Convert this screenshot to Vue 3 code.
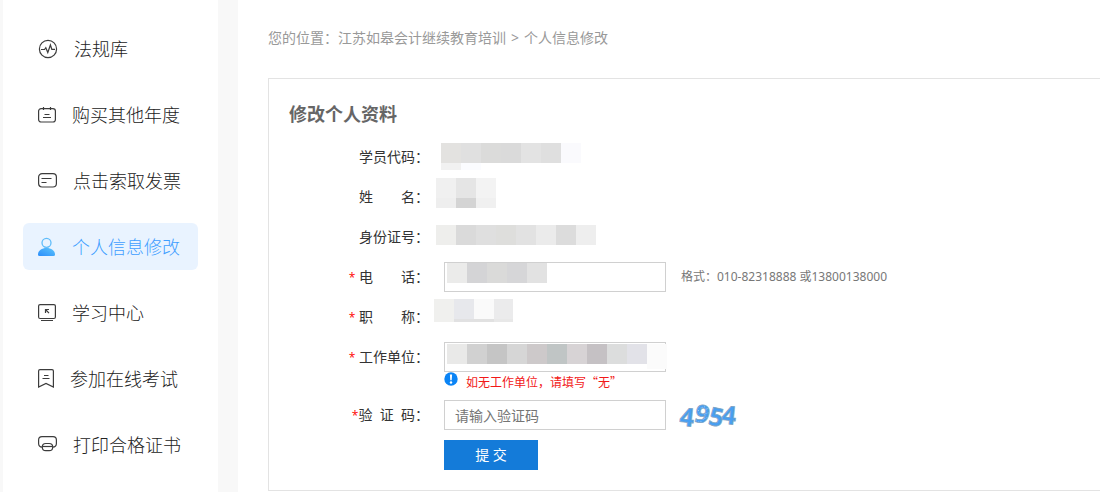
<script setup>
const nav = [
  { id: 'law', text: '法规库' },
  { id: 'buy', text: '购买其他年度' },
  { id: 'invoice', text: '点击索取发票' },
  { id: 'profile', text: '个人信息修改' },
  { id: 'study', text: '学习中心' },
  { id: 'exam', text: '参加在线考试' },
  { id: 'print', text: '打印合格证书' },
]

const strip = (colors, y = 0, h = 20) =>
  colors.map((fill, i) => ({ x: i * 20, y, w: 20, h, fill }))

const masks = {
  code: {
    w: 140, h: 27,
    cells: [
      ...strip(['#e3e2e0', '#e0e0e0', '#dbdbda', '#dadada', '#e3e3e3', '#dfdfdf', '#fafafd']),
      ...strip(['#f1f1f1', '#fbfcff'], 20, 7),
    ],
  },
  name: {
    w: 60, h: 30,
    cells: [...strip(['#f0f0f0', '#e5e5e5', '#f3f3f3']), ...strip(['#eeeeee', '#d4d4d4', '#f0f0f0'], 20, 10)],
  },
  card: {
    w: 160, h: 20,
    cells: strip(['#eeeeec', '#dadada', '#dfdfdf', '#dededc', '#e2e2e2', '#ebebeb', '#dcdcdc', '#eeeeee']),
  },
  phone: { w: 100, h: 20, cells: strip(['#ebebea', '#d4d4d6', '#dadad9', '#d6d6d8', '#e2e2e2']) },
  title: {
    w: 79, h: 23,
    cells: [
      ...strip(['#f0f0ee', '#e7e8ec', '#fafafa', '#ebebec']),
      ...strip(['#f0f0ee', '#e1e1e2', '#e1e1e1', '#e8e8e8'], 20, 3),
    ],
  },
  company: {
    w: 220, h: 25,
    cells: [
      ...strip(['#e9e9e8', '#d1d1d1', '#c5c5c5', '#d6d6d6', '#cdc9ca', '#c0c5c5', '#d7d3d5', '#c5c1c4', '#dcdddd', '#e2e2e8']),
      { x: 200, y: 0, w: 20, h: 25, fill: '#fbfbfb' },
    ],
  },
}

const rows = [
  { id: 'code', label: '学员代码：' },
  { id: 'name', label: '姓　　名：' },
  { id: 'card', label: '身份证号：' },
  { id: 'phone', label: '电　　话：', required: true, input: true, hint: '格式：010-82318888 或13800138000' },
  { id: 'title', label: '职　　称：', required: true },
  { id: 'company', label: '工作单位：', required: true, input: true, tip: '如无工作单位，请填写“无”' },
]
</script>

<template>
  <div class="page">
    <nav class="sidebar">
      <a v-for="n in nav" :key="n.id" href="#" class="item" :class="{ active: n.id === 'profile' }">
        <svg v-if="n.id === 'law'" width="20" height="20" viewBox="0 0 20 20" class="icon">
          <circle cx="10" cy="10" r="8.6" />
          <path d="M3 10.500h3.500l1.300-1.800 2 4.800 2.600-7.500 1.400 4.300h3.200" />
        </svg>
        <svg v-else-if="n.id === 'buy'" width="18" height="18" viewBox="0 0 18 18" class="icon">
          <rect x=".6" y="2.600" width="16.800" height="13.400" rx="2.500" />
          <path d="M5.500 1v3M12.500 1v3M6.500 8.500h5M5 11.500h8" />
        </svg>
        <svg v-else-if="n.id === 'invoice'" width="19" height="18" viewBox="0 0 19 18" class="icon">
          <rect x=".6" y="1.600" width="17.800" height="13.400" rx="3.500" />
          <path d="M3.500 6.500h10M3.500 10.500h5" />
        </svg>
        <svg v-else-if="n.id === 'profile'" width="18" height="20" viewBox="0 0 18 20">
          <defs>
            <linearGradient id="person" x1="0" y1="1" x2="1" y2="0">
              <stop offset="0" stop-color="#2b8dfb" />
              <stop offset="1" stop-color="#5cc4fb" />
            </linearGradient>
          </defs>
          <circle cx="8.500" cy="5.800" r="4.500" fill="none" stroke="#5fbcfa" stroke-width="1.300" />
          <path d="M0 17.500C0 13.500 4 11 8.500 11S17 13.500 17 17.500Q17 19 15.500 19H1.500Q0 19 0 17.500Z" fill="url(#person)" />
        </svg>
        <svg v-else-if="n.id === 'study'" width="18" height="18" viewBox="0 0 18 18" class="icon">
          <rect x=".6" y=".6" width="16.800" height="13.900" rx="1.500" />
          <path d="M3 16.500h12M7.500 9V5.500H11M7.500 5.500l3.500 3.700" />
        </svg>
        <svg v-else-if="n.id === 'exam'" width="16" height="19" viewBox="0 0 16 19" class="icon">
          <path d="M.6 18V2Q.6.600 2 .6H14Q15.400.600 15.400 2V18L8 14.500ZM6 6.500h4.500M4.500 9.500h7" />
        </svg>
        <svg v-else width="19" height="20" viewBox="0 0 19 20" class="icon">
          <path d="M4.300 12.200C2 12 .6 10.500.6 8.500V5Q.6 1.600 4 1.600H15Q18.400 1.600 18.400 5V8.500C18.400 10.500 17 12 14.700 12.200" />
          <path d="M4.500 11.500h10" />
          <rect x="4.300" y="8.500" width="10.400" height="7.200" rx="3.500" />
        </svg>
        <span>{{ n.text }}</span>
      </a>
    </nav>

    <main class="main">
      <p class="crumbs">
        <span>您的位置：江苏如皋会计继续教育培训</span>
        <span>&gt;</span>
        <span>个人信息修改</span>
      </p>
      <form class="panel" @submit.prevent>
        <h1>修改个人资料</h1>
        <div v-for="r in rows" :key="r.id" class="row">
          <component :is="r.input ? 'label' : 'span'" class="label" :for="r.input ? r.id : undefined">
            <i v-if="r.required">*</i>&nbsp;{{ r.label }}
          </component>
          <div class="value">
            <input v-if="r.input" :id="r.id" type="text" />
            <svg class="mask" :class="r.id" :width="masks[r.id].w" :height="masks[r.id].h" shape-rendering="crispEdges" aria-hidden="true">
              <rect v-for="(c, i) in masks[r.id].cells" :key="i" :x="c.x" :y="c.y" :width="c.w" :height="c.h" :fill="c.fill" />
            </svg>
            <span v-if="r.hint" class="hint">{{ r.hint }}</span>
          </div>
          <p v-if="r.tip" class="tip">
            <svg width="14" height="14" viewBox="0 0 14 14">
              <circle cx="7" cy="7" r="6.700" fill="#0b84f5" />
              <path d="M5.900 2.500h2.200l-.4 5.800H6.300Z" fill="#fff" />
              <circle cx="7" cy="10.500" r="1.200" fill="#fff" />
            </svg>
            <span>{{ r.tip }}</span>
          </p>
        </div>
        <div class="row">
          <label class="label" for="captcha"><i>*</i>验&nbsp;&nbsp;证&nbsp;&nbsp;码：</label>
          <div class="value">
            <input id="captcha" type="text" placeholder="请输入验证码" />
            <svg class="captcha" width="64" height="40" viewBox="0 0 64 40">
              <defs>
                <pattern id="speckle" width="5" height="5" patternUnits="userSpaceOnUse">
                  <rect width="5" height="5" fill="#489ff2" />
                  <path d="M0 4l2-2M3 1l1 1" stroke="#9cc8f2" />
                </pattern>
              </defs>
              <text x="1" y="31" transform="rotate(6 8 22)">4</text>
              <text x="16" y="28" transform="rotate(14 23 20)" class="rough">9</text>
              <text x="30" y="31" transform="rotate(12 37 23)">5</text>
              <text x="43" y="29" transform="rotate(6 50 20)">4</text>
            </svg>
          </div>
        </div>
        <button type="submit">提 交</button>
      </form>
    </main>
  </div>
</template>

<style>
body {
  margin: 0;
  background: #fff;
}
</style>

<style scoped>
.page {
  display: flex;
  min-height: 100vh;
  overflow: hidden;
  font-family: "Noto Sans", "Noto Sans CJK SC", sans-serif;
  font-size: 14px;
  line-height: 20px;
  color: #333;
}
.sidebar {
  box-sizing: border-box;
  flex: 0 0 238px;
  display: flex;
  flex-direction: column;
  gap: 19px;
  padding: 25px 20px 0;
  border: solid #f8f8f8;
  border-width: 0 20px 0 3px;
}
.item {
  display: flex;
  align-items: center;
  gap: 16px;
  height: 47px;
  padding-left: 15px;
  border-radius: 6px;
  font-size: 18px;
  font-weight: 300;
  white-space: nowrap;
  color: #222;
  text-decoration: none;
}
.item.active {
  background: #e9f3ff;
  color: #409eff;
}
.item svg {
  flex: none;
}
.icon {
  fill: none;
  stroke: #3c3c3c;
  stroke-width: 1.2;
}
.main {
  flex: 1;
  min-width: 0;
  padding: 28px 0 0 30px;
}
.crumbs {
  display: flex;
  gap: 5px;
  margin: 0 0 30px;
  color: #999;
}
.panel {
  padding: 23px 0 20px;
  border: 1px solid #e3e3e3;
  border-right: 0;
}
h1 {
  margin: 0 0 11px 20px;
  font-size: 18px;
  line-height: 24px;
  font-weight: 700;
  color: #666;
}
.row {
  display: grid;
  grid-template-columns: 160px 1fr;
  column-gap: 15px;
}
.label {
  text-align: right;
  white-space: nowrap;
  line-height: 40px;
}
i {
  font-family: "Open Sans", sans-serif;
  font-size: 12px;
  line-height: 1;
  font-style: normal;
  color: #f00;
}
.value {
  position: relative;
  display: flex;
  align-items: center;
  gap: 15px;
  height: 40px;
}
input {
  box-sizing: border-box;
  width: 222px;
  height: 30px;
  padding: 0 10px;
  border: 1px solid #d0d0d0;
  border-radius: 0;
  background: #fff;
  font: inherit;
  color: #333;
}
input::placeholder {
  color: #757575;
}
.mask {
  position: absolute;
}
.mask.code {
  left: -3px;
  top: 6px;
}
.mask.name {
  left: -8px;
  top: 1px;
}
.mask.card {
  left: -8px;
  top: 8px;
}
.mask.phone {
  left: 3px;
  top: 6px;
}
.mask.title {
  left: -10px;
  top: 2px;
}
.mask.company {
  left: 3px;
  top: 7px;
}
.hint {
  font-size: 12px;
  line-height: 22px;
  color: #777;
}
.tip {
  grid-column: 2;
  display: flex;
  gap: 8px;
  margin: -5px 0 3px;
  font-family: "Noto Sans CJK SC", sans-serif;
  font-size: 12px;
  color: #f21818;
}
.captcha {
  margin-left: -2px;
}
.captcha text {
  font-family: "Noto Sans", sans-serif;
  font-size: 25px;
  font-weight: 700;
  fill: #489ff2;
  stroke: #7fa4c6;
  stroke-width: 0.8;
}
.captcha .rough {
  fill: url(#speckle);
}
button {
  display: block;
  width: 94px;
  height: 30px;
  margin: 5px 0 0 175px;
  padding: 0;
  border: 0;
  background: #147bd9;
  color: #fff;
  font: inherit;
}
</style>
